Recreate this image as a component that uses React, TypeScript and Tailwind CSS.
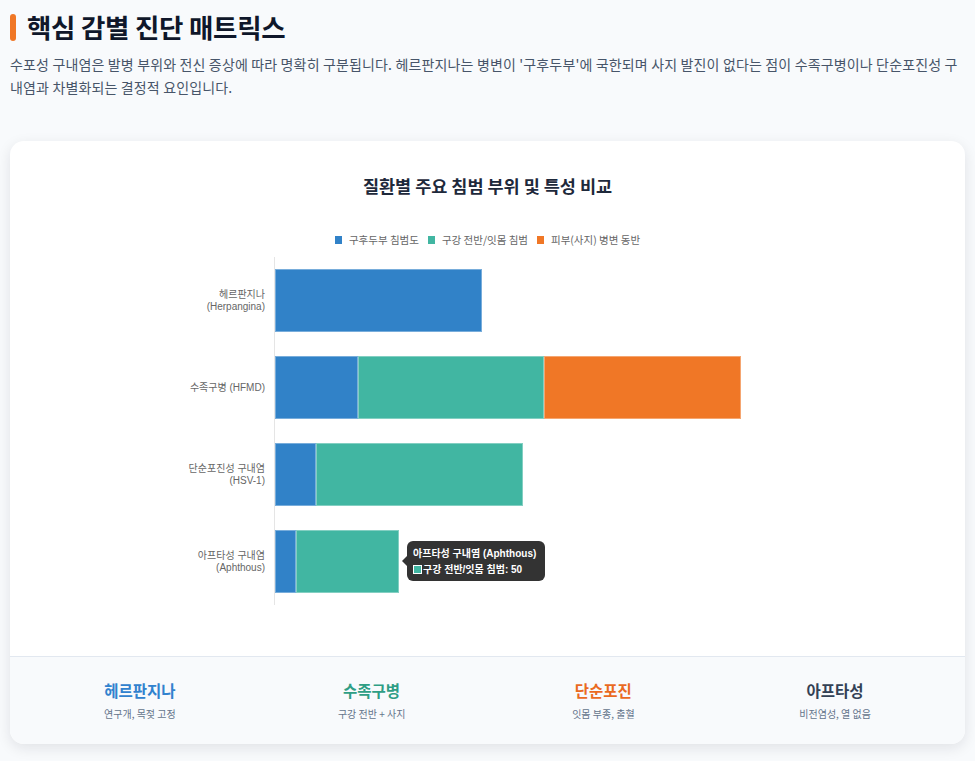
import React from "react";

const BLUE = "#3182c8";
const TEAL = "#41b6a2";
const ORANGE = "#f07726";
const PX_PER_UNIT = 2.07;

type Row = { label: string[]; values: [number, number, number] };

const rows: Row[] = [
  { label: ["헤르판지나", "(Herpangina)"], values: [100, 0, 0] },
  { label: ["수족구병 (HFMD)"], values: [40, 90, 95] },
  { label: ["단순포진성 구내염", "(HSV-1)"], values: [20, 100, 0] },
  { label: ["아프타성 구내염", "(Aphthous)"], values: [10, 50, 0] },
];

const colors = [BLUE, TEAL, ORANGE];

const summary = [
  { title: "헤르판지나", sub: "연구개, 목젖 고정", color: "text-[#3182ce]" },
  { title: "수족구병", sub: "구강 전반 + 사지", color: "text-[#2f9e85]" },
  { title: "단순포진", sub: "잇몸 부종, 출혈", color: "text-[#ea6a1f]" },
  { title: "아프타성", sub: "비전염성, 열 없음", color: "text-[#334155]" },
];

export default function App() {
  return (
    <div className="min-h-screen bg-[#f8fafc] px-[10px] pt-[9px] font-['Noto_Sans_CJK_KR','Noto_Sans',sans-serif]">
      <div className="flex h-[36px] items-center gap-[11px]">
        <div className="h-[27px] w-[6px] rounded-full bg-[#f07726]" />
        <h1 className="text-[26.5px] font-bold leading-[36px] tracking-[-0.01em] text-[#0f172a]">
          핵심 감별 진단 매트릭스
        </h1>
      </div>
      <p className="mt-[8px] text-[14px] leading-[23px] tracking-[0.15px] text-[#475569]">
        수포성 구내염은 발병 부위와 전신 증상에 따라 명확히 구분됩니다. 헤르판지나는 병변이 '구후두부'에 국한되며 사지 발진이 없다는 점이 수족구병이나 단순포진성 구내염과 차별화되는 결정적 요인입니다.
      </p>

      <div className="mt-[42px] overflow-hidden rounded-[14px] bg-white shadow-[0_4px_14px_rgba(15,23,42,0.10)]">
        <div className="pt-[33px] pb-[51px]">
          <h2 className="text-center text-[17.5px] font-bold leading-[24px] text-[#1e293b]">
            질환별 주요 침범 부위 및 특성 비교
          </h2>
          <div className="mt-[35px] flex h-[14px] items-center justify-center gap-[9px] text-[10.5px] text-[#666]">
            <div className="flex items-center gap-[7px]">
              <span className="h-[8px] w-[7px] bg-[#3182c8]" />
              <span>구후두부 침범도</span>
            </div>
            <div className="flex items-center gap-[7px]">
              <span className="h-[8px] w-[7px] bg-[#41b6a2]" />
              <span>구강 전반/잇몸 침범</span>
            </div>
            <div className="flex items-center gap-[7px]">
              <span className="h-[8px] w-[7px] bg-[#f07726]" />
              <span>피부(사지) 병변 동반</span>
            </div>
          </div>

          <div className="mt-[10px] flex">
            <div className="flex w-[264px] flex-col pr-[9px] font-['Liberation_Sans','Noto_Sans_CJK_KR',sans-serif] text-[10px] leading-[12px] text-[#666]">
              {rows.map((r) => (
                <div key={r.label[0]} className="flex h-[87px] flex-col items-end justify-center text-right">
                  {r.label.map((l) => (
                    <span key={l}>{l}</span>
                  ))}
                </div>
              ))}
            </div>
            <div className="relative flex flex-1 flex-col border-l border-[#e5e5e5]">
              {rows.map((r) => (
                <div key={r.label[0]} className="flex h-[87px] items-center">
                  <div className="flex h-[63px]">
                    {r.values.map((v, i) =>
                      v > 0 ? (
                        <div
                          key={i}
                          className="h-full shadow-[inset_0_0_0_1px_rgba(255,255,255,0.35)]"
                          style={{ width: v * PX_PER_UNIT, backgroundColor: colors[i] }}
                        />
                      ) : null
                    )}
                  </div>
                </div>
              ))}

              <div className="absolute left-[132px] top-[284px] flex h-[40px] w-[138px] flex-col justify-center gap-[3px] rounded-[6px] bg-[#333333] px-[6px] font-['Liberation_Sans','Noto_Sans_CJK_KR',sans-serif] text-white">
                <div className="absolute left-[-5px] top-1/2 h-0 w-0 -translate-y-1/2 border-y-[5px] border-r-[5px] border-y-transparent border-r-[#333333]" />
                <div className="text-[10px] font-bold leading-[13px]">아프타성 구내염 (Aphthous)</div>
                <div className="flex items-center gap-[1px] text-[10px] font-semibold leading-[13px]">
                  <span className="h-[9px] w-[9px] border border-white bg-[#41b6a2]" />
                  <span>구강 전반/잇몸 침범: 50</span>
                </div>
              </div>
            </div>
          </div>
        </div>

        <div className="grid grid-cols-4 border-t border-[#e2e8f0] bg-[#f8fafc] px-[14px] pt-[23px] pb-[23px]">
          {summary.map((s) => (
            <div key={s.title} className="flex flex-col items-center">
              <div className={`text-[15.5px] font-bold leading-[20px] ${s.color}`}>{s.title}</div>
              <div className="mt-[7px] text-[10px] leading-[14px] text-[#64748b]">{s.sub}</div>
            </div>
          ))}
        </div>
      </div>
    </div>
  );
}
